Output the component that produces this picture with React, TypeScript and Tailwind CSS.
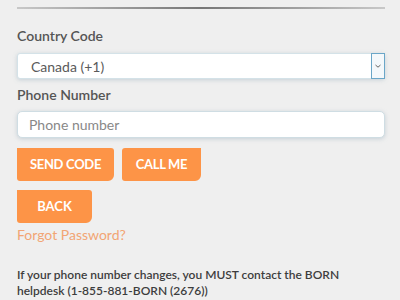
import React from "react";

export default function App() {
  return (
    <div className="w-[400px] h-[300px] bg-[#efefef] overflow-hidden" style={{ fontFamily: "Lato, 'Open Sans', sans-serif" }}>
      <div className="px-[17px]">
        <div className="pt-[7px]">
          <div className="h-[2px] w-[368px] bg-gradient-to-r from-[#c8c8c8] via-[#777777] to-[#c8c8c8]" />
        </div>
        <div className="mt-[18px] text-[14px] leading-[18px] font-semibold text-[#555555]">Country Code</div>
        <div className="mt-[8px] relative h-[26px] w-[368px] rounded-[3px] bg-white border border-[#d4e2e8] shadow-[0_1px_4px_rgba(120,150,170,0.35)] flex items-center">
          <span className="pl-[13px] text-[14px] text-[#5a5a5a]">Canada (+1)</span>
          <div className="absolute right-[-1px] top-[-1px] h-[26px] w-[14px] border border-[#6aa6c8] bg-[#f4f8fb] flex items-center justify-center">
            <svg width="8" height="6" viewBox="0 0 8 6">
              <path d="M1.5 2 L4 4.2 L6.5 2" fill="none" stroke="#666" strokeWidth="1" />
            </svg>
          </div>
        </div>
        <div className="mt-[7px] text-[14px] leading-[18px] font-semibold text-[#555555]">Phone Number</div>
        <div className="mt-[7px] h-[27px] w-[368px] rounded-[5px] bg-white border border-[#cfdde3] shadow-[0_1px_4px_rgba(120,150,170,0.35)] flex items-center">
          <span className="pl-[11px] text-[14px] text-[#888888]">Phone number</span>
        </div>
        <div className="mt-[10px] flex gap-[8px]">
          <button className="h-[33px] w-[97px] bg-[#fd9447] text-white text-[13px] font-bold rounded-tr-[3px] rounded-br-[6px] rounded-bl-[3px] tracking-[-0.3px]">SEND CODE</button>
          <button className="h-[33px] w-[79px] bg-[#fd9447] text-white text-[13px] font-bold rounded-tl-[3px] rounded-br-[6px] rounded-bl-[3px] tracking-[-0.3px]">CALL ME</button>
        </div>
        <div className="mt-[9px]">
          <button className="h-[33px] w-[75px] bg-[#fd9447] text-white text-[13px] font-bold rounded-tr-[3px] rounded-br-[6px] rounded-bl-[3px]">BACK</button>
        </div>
        <div className="mt-[3px] text-[14px] leading-[18px] text-[#f2a574]">Forgot Password?</div>
        <div className="mt-[23px] text-[12px] leading-[16px] font-semibold text-[#3d3d3d]">
          If your phone number changes, you MUST contact the BORN<br />helpdesk (1-855-881-BORN (2676))
        </div>
      </div>
    </div>
  );
}
